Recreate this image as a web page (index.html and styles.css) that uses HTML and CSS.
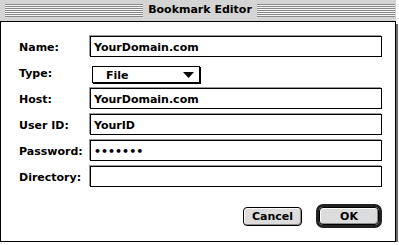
FILE: index.html
```html
<!DOCTYPE html>
<html lang="en">
<head>
  <meta charset="UTF-8" />
  <title>Bookmark Editor</title>
  <link rel="stylesheet" href="styles.css">
</head>
<body>

  <div class="window">
    <div class="titlebar">
      <div class="stripes left"></div>
      <div class="title">Bookmark Editor</div>
      <div class="stripes right"></div>
    </div>

    <div class="content">
      <div class="form">
        <div class="label">Name:</div>
        <div class="field">YourDomain.com</div>

        <div class="label">Type:</div>
        <div class="popup-cell">
          <div class="popup">
            <span>File</span>
            <svg class="arrow" width="11" height="6" viewBox="0 0 11 6"><polygon points="0,0 11,0 5.5,6" fill="#000"/></svg>
          </div>
        </div>

        <div class="label">Host:</div>
        <div class="field">YourDomain.com</div>

        <div class="label">User ID:</div>
        <div class="field">YourID</div>

        <div class="label">Password:</div>
        <div class="field dots">&bull;&bull;&bull;&bull;&bull;&bull;&bull;</div>

        <div class="label">Directory:</div>
        <div class="field"></div>
      </div>

      <div class="buttons">
        <div class="btn">Cancel</div>
        <div class="default-ring">
          <div class="btn">OK</div>
        </div>
      </div>
    </div>
  </div>

</body>
</html>
```

FILE: styles.css
```css
/* Mac OS platinum dialog */
* {
  box-sizing: border-box;
}
body {
  margin: 0;
  padding: 0;
  background: #fff;
  font-family: 'DejaVu Sans', 'Liberation Sans', sans-serif;
  font-weight: bold;
  font-size: 11px;
  color: #000;
}
.window {
  width: 396px;
}
.titlebar {
  height: 22px;
  background: #d4d4d4;
  border-bottom: 1px solid #000;
  display: flex;
  align-items: center;
  padding: 0 1px 1px 5px;
}
.stripes {
  flex: 1;
  height: 13px;
  background: repeating-linear-gradient(to bottom, #8a8a8a 0 1px, #f4f4f4 1px 2px);
}
.title {
  padding: 0 5px;
  font-size: 11px;
  line-height: 14px;
}

.content {
  background: #fff;
  border-left: 1px solid #000;
  border-right: 1px solid #000;
  border-bottom: 1px solid #000;
  box-shadow: 2px 2px 0 #6b6b6b;
  padding: 14px 13px 13px 18px;
}
.form {
  display: grid;
  grid-template-columns: 71px 1fr;
  grid-auto-rows: 21px;
  row-gap: 5px;
}
.label {
  display: flex;
  align-items: center;
  padding-top: 1px;
}
.field {
  border: 1px solid #000;
  box-shadow: -1px -1px 0 #9a9a9a, 1px 1px 0 #fff;
  display: flex;
  align-items: center;
  padding: 1px 0 0 3px;
}
.dots {
  letter-spacing: 0;
}

/* Popup menu */
.popup-cell {
  display: flex;
  align-items: center;
  padding-top: 4px;
}
.popup {
  width: 108px;
  height: 17px;
  margin-left: 2px;
  border: 1px solid #000;
  box-shadow: 1px 1px 0 #000;
  display: flex;
  align-items: center;
  justify-content: space-between;
  padding: 1px 5px 0 13px;
}
.arrow {
  margin-top: -1px;
}

/* Buttons */
.buttons {
  display: flex;
  justify-content: flex-end;
  align-items: center;
  gap: 14px;
  margin-top: 17px;
}
.btn {
  width: 59px;
  height: 19px;
  border: 1px solid #000;
  border-radius: 4px;
  background: #dcdcdc;
  box-shadow: inset 1px 1px 0 #fff, inset -1px -1px 0 #8c8c8c;
  display: flex;
  align-items: center;
  justify-content: center;
  padding-top: 1px;
}
.default-ring {
  border: 3px solid #222;
  border-radius: 7px;
  background: #bdbdbd;
}
.default-ring .btn {
  width: 60px;
  height: 18px;
}
```
